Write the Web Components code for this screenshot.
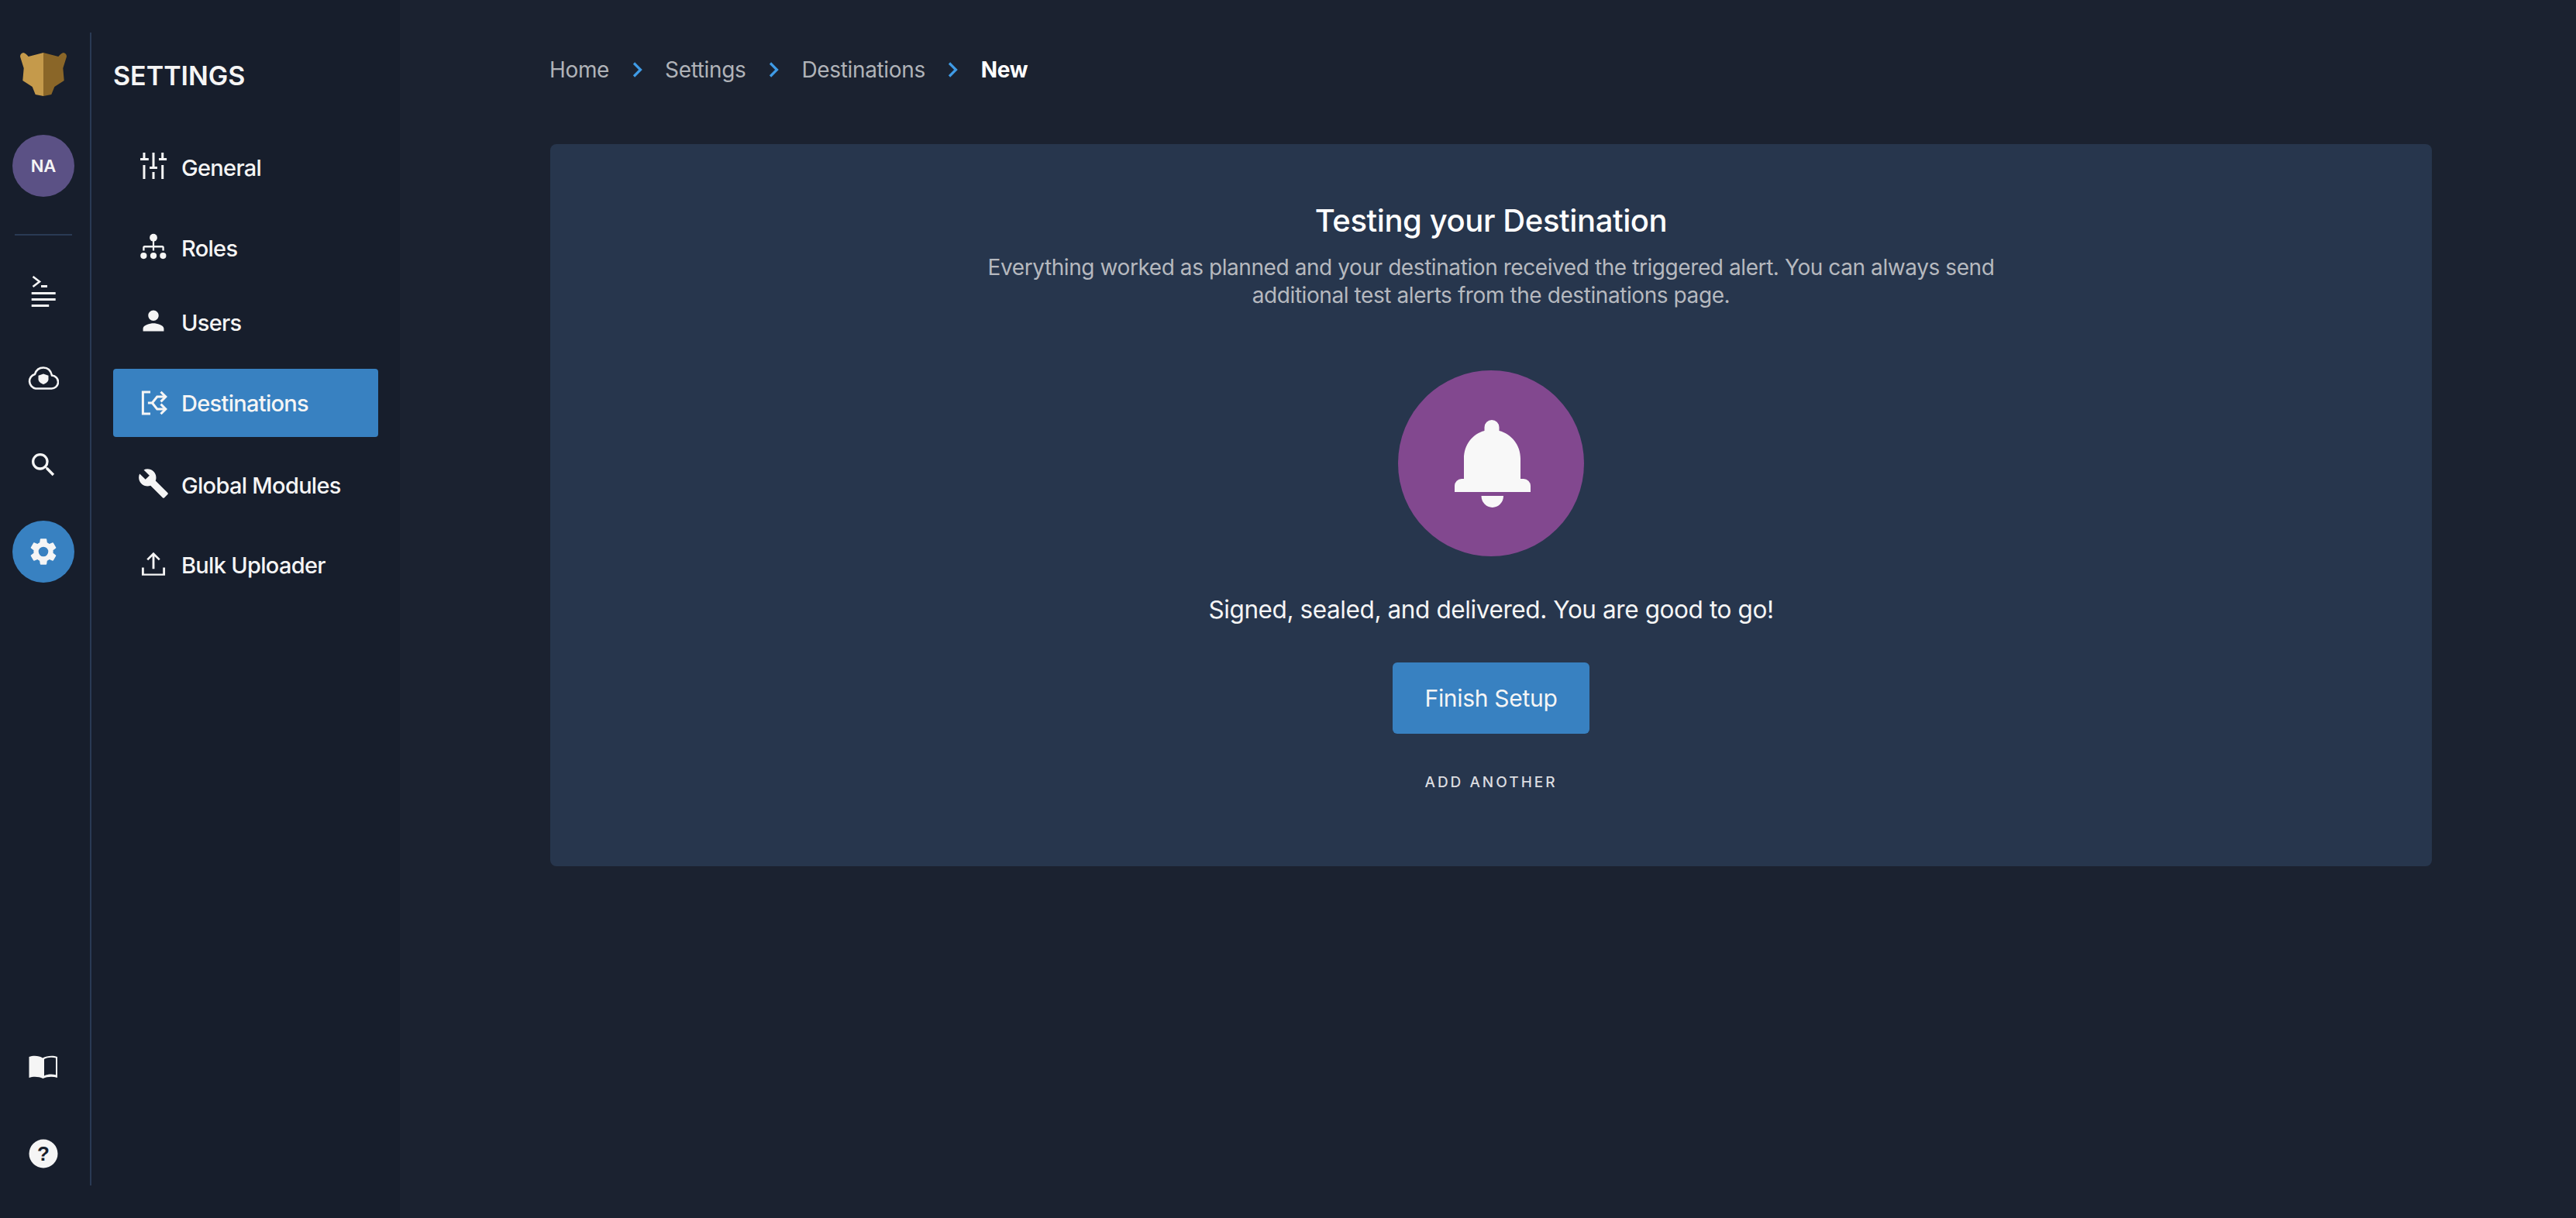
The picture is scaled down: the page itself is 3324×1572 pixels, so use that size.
<!DOCTYPE html>
<html>
<head>
<meta charset="utf-8">
<style>
html, body { margin: 0; height: 100%; background: #1b2230; }
body { font-family: Inter, "Liberation Sans", sans-serif; color: #f5f5f5; }
</style>
</head>
<body>
<app-shell>
  <icon-rail slot="rail"></icon-rail>
  <settings-menu slot="menu"></settings-menu>
  <bread-crumbs slot="crumbs"></bread-crumbs>
  <result-card slot="card"></result-card>
</app-shell>
<script>
const font = 'Inter, "Liberation Sans", sans-serif';

const icons = {
  sliders: '<path d="M3.45 1.3h1.9v4.4h-1.9zM1.3 5.700h6.800v1.900H1.300zM3.45 11.400h1.900v11.300h-1.900zM11.05 1.300h1.900v11.300h-1.900zM8.900 12.600h6.200v1.900H8.900zM11.05 17h1.900v5.700h-1.900zM18.45 1.300h1.900v4.400h-1.900zM16.4 5.700h6.400v1.900h-6.400zM18.45 11.400h1.900v11.300h-1.900z"/>',
  roles: '<circle cx="12" cy="4.900" r="3.100"/><path d="M11.300 7h1.400v4.400h6.400q1.600 0 1.600 1.600v2.500h-1.500v-2.500h-6.500v2.500h-1.400V13H4.800v2.500H3.300V13q0-1.600 1.600-1.600h6.400z"/><circle cx="4" cy="19.600" r="2.600"/><circle cx="12" cy="19.600" r="2.600"/><circle cx="19.800" cy="19.600" r="2.600"/>',
  user: '<path transform="translate(12 12) scale(1.06) translate(-12 -12)" d="M12 12c2.210 0 4-1.790 4-4s-1.790-4-4-4-4 1.790-4 4 1.790 4 4 4zm0 2c-2.670 0-8 1.340-8 4v2h16v-2c0-2.660-5.330-4-8-4z"/>',
  dest: '<g fill="none" stroke="#f5f5f5" stroke-width="1.900"><path d="M9.500 3.200H3.400v17.600h6.100"/><path d="M7.500 12h3.500l4-5h6.500M11 12l4 5h6.500"/><path d="M18 3L22 7l-4 4M18 13l4 4-4 4"/></g>',
  wrench: '<path transform="translate(12 12) scale(1.08) translate(-12 -12)" d="M22.700 19l-9.100-9.100c.9-2.300.4-5-1.500-6.900-2-2-5-2.400-7.400-1.300L9 6 6 9 1.600 4.700C.4 7.100.9 10.100 2.900 12.100c1.900 1.900 4.600 2.400 6.900 1.500l9.100 9.100c.4.4 1 .4 1.400 0l2.300-2.300c.5-.4.5-1.100.1-1.400z"/>',
  upload: '<path d="M11.100 16.500V6.300L7.700 9.700 6.500 8.500 12 3l5.500 5.500-1.200 1.200-3.400-3.400v10.200zM2.500 15.500h1.800v5h15.400v-5h1.800V22H2.500z"/>',
  search: '<path d="M15.500 14h-.79l-.28-.27A6.470 6.470 0 0 0 16 9.500 6.500 6.500 0 1 0 9.500 16c1.610 0 3.090-.59 4.230-1.570l.27.28v.79l5 4.990L20.490 19l-4.990-5zm-6 0C7.010 14 5 11.990 5 9.500S7.010 5 9.500 5 14 7.010 14 9.500 11.990 14 9.500 14z"/>',
  gear: '<path d="M19.140 12.940c.04-.3.06-.61.06-.94 0-.32-.02-.64-.07-.94l2.030-1.580a.49.49 0 0 0 .12-.61l-1.920-3.320a.49.49 0 0 0-.59-.22l-2.390.96c-.5-.38-1.030-.7-1.620-.94l-.36-2.540a.48.48 0 0 0-.48-.41h-3.840c-.24 0-.43.17-.47.41l-.36 2.540c-.59.24-1.130.57-1.620.94l-2.390-.96c-.22-.08-.47 0-.59.22L2.740 8.870c-.12.21-.08.47.12.61l2.030 1.580c-.05.3-.09.63-.09.94s.02.64.07.94l-2.030 1.580a.49.49 0 0 0-.12.61l1.920 3.320c.12.22.37.29.59.22l2.390-.96c.5.38 1.030.7 1.620.94l.36 2.540c.05.24.24.41.48.41h3.840c.24 0 .44-.17.47-.41l.36-2.540c.59-.24 1.130-.56 1.620-.94l2.390.96c.22.08.47 0 .59-.22l1.920-3.320c.12-.22.07-.47-.12-.61l-2.010-1.580zM12 15.600A3.600 3.600 0 1 1 12 8.400a3.600 3.600 0 0 1 0 7.200z"/>'
};

class AppShell extends HTMLElement {
  constructor() {
    super();
    this.attachShadow({ mode: "open" }).innerHTML = `
<style>
:host { display: flex; height: 1572px; overflow: hidden; }
aside { display: flex; width: 516px; flex: none; background: #171e2c; }
main { flex: 1; padding: 70px 186px 0 193px; }
.crumbs { display: block; margin-bottom: 76px; }
.card { display: block; margin-left: 1px; }
</style>
<aside><slot name="rail"></slot><slot name="menu"></slot></aside>
<main><div class="crumbs"><slot name="crumbs"></slot></div><div class="card"><slot name="card"></slot></div></main>`;
  }
}

class IconRail extends HTMLElement {
  constructor() {
    super();
    this.attachShadow({ mode: "open" }).innerHTML = `
<style>
:host { display: flex; flex-direction: column; align-items: center; width: 118px; box-sizing: border-box; margin: 42px 0; padding-right: 4px; height: 1488px; border-right: 2px solid #2a3a54; flex: none; }
svg { display: block; fill: #f5f5f5; flex: none; }
.logo { margin-top: 26px; }
.badge { width: 80px; height: 80px; border-radius: 50%; display: flex; align-items: center; justify-content: center; flex: none; }
.na { margin-top: 50px; background: #5b5185; font: 600 22px ${font}; }
hr { width: 74px; height: 2px; border: 0; background: #2a3a54; margin: 48px 0 0; flex: none; }
.gear { background: #3881c1; margin-top: 52px; }
.bottom { margin-top: auto; display: flex; flex-direction: column; align-items: center; }
</style>
<svg class="logo" width="60" height="56" viewBox="0 0 60 56">
  <path fill="#c59a4b" d="M30 0L10.700 5Q7 .5 4 0Q0 1 0 5L4.700 20L3.300 36L15.700 44L19.700 54L30 56z"/>
  <path fill="#8a6628" d="M30 0L49.300 5Q53 .5 56 0Q60 1 60 5L55.300 20L56.700 36L44.300 44L40.300 54L30 56z"/>
</svg>
<div class="badge na">NA</div>
<hr>
<svg style="margin-top:52px" width="32" height="41" viewBox="0 0 32 41">
  <path fill="none" stroke="#f5f5f5" stroke-width="2.600" d="M2.500 1L11 7.500L2.500 14"/>
  <path d="M13 12h8v3h-8zM.7 21h31v3H.7zM.7 29h31v3H.7zM.7 37h22.500v3H.7z"/>
</svg>
<svg style="margin-top:76px" width="40" height="30" viewBox="0 0 40 30">
  <path fill="none" stroke="#f5f5f5" stroke-width="2.600" d="M10 28.500H30a8.500 8.500 0 0 0 1-17C29.500 5 25.500 1.500 20 1.500c-5.500 0-9.500 3.500-11 8.500A9.500 9.500 0 0 0 10 28.500z"/>
  <path d="M20 9.500l6.500 2.300v4.500c0 3.200-2.800 5.500-6.500 6.700-3.700-1.200-6.500-3.500-6.500-6.700v-4.500z"/>
</svg>
<svg style="margin-top:77px" width="40" height="40" viewBox="0 0 24 24">${icons.search}</svg>
<div class="badge gear"><svg width="42" height="42" viewBox="0 0 24 24">${icons.gear}</svg></div>
<div class="bottom">
  <svg width="38" height="30" viewBox="0 0 38 30">
    <path d="M18 3.500C14 .5 6 0 .5 2v27c5.500-2 13-1.500 18 1 5-2.500 12.500-3 18.500-1V2c-5.500-2-13.500-1.500-19 1.500z" />
    <path fill="#171e2c" d="M20 5c4-2.500 10-2.800 15-1.500v21.700c-5-1-11-.8-15 1.300z"/>
  </svg>
  <svg style="margin:78px 0 22px" width="38" height="38" viewBox="0 0 38 38">
    <circle cx="19" cy="19" r="18.500"/>
    <text x="19" y="28" text-anchor="middle" font-family="Liberation Sans" font-weight="700" font-size="26" fill="#171e2c">?</text>
  </svg>
</div>`;
  }
}

class MenuItem extends HTMLElement {
  constructor() {
    super();
    const icon = icons[this.getAttribute("icon")];
    this.attachShadow({ mode: "open" }).innerHTML = `
<style>
:host { display: flex; align-items: center; height: 88px; margin-top: var(--gap, 0); padding-left: 33px; gap: 17px; font: 500 29px ${font}; letter-spacing: -0.7px; color: #f5f5f5; border-radius: 4px; }
:host([active]) { background: #3881c1; }
svg { fill: #f5f5f5; flex: none; display: block; margin-bottom: var(--lift, 5px); }
</style>
<svg width="38" height="38" viewBox="0 0 24 24">${icon}</svg><slot></slot>`;
  }
}

class SettingsMenu extends HTMLElement {
  constructor() {
    super();
    this.attachShadow({ mode: "open" }).innerHTML = `
<style>
:host { display: block; flex: 1; padding: 0 28px 0 28px; }
h2 { margin: 0; padding-top: 78px; height: 87px; font: 600 34px/40px ${font}; letter-spacing: 0; color: #f5f5f5; }
</style>
<h2>SETTINGS</h2>
<menu-item icon="sliders" style="--gap:7px">General</menu-item>
<menu-item icon="roles" style="--gap:16px">Roles</menu-item>
<menu-item icon="user" style="--gap:8px">Users</menu-item>
<menu-item icon="dest" active style="--gap:16px;--lift:0px">Destinations</menu-item>
<menu-item icon="wrench" style="--gap:18px">Global Modules</menu-item>
<menu-item icon="upload" style="--gap:15px">Bulk Uploader</menu-item>`;
  }
}

class BreadCrumbs extends HTMLElement {
  constructor() {
    super();
    const chev = '<svg width="13" height="20" viewBox="0 0 13 20"><path d="M2 1.500 L10.500 10 L2 18.500" fill="none" stroke="#3f9be6" stroke-width="3.200"/></svg>';
    this.attachShadow({ mode: "open" }).innerHTML = `
<style>
:host { display: flex; align-items: center; gap: 29.5px; height: 40px; font: 400 28px ${font}; letter-spacing: -0.35px; color: #b0b3b8; }
b { font-weight: 700; color: #fff; }
svg { flex: none; display: block; }
</style>
<span>Home</span>${chev}<span>Settings</span>${chev}<span>Destinations</span>${chev}<b>New</b>`;
  }
}

class ResultCard extends HTMLElement {
  constructor() {
    super();
    this.attachShadow({ mode: "open" }).innerHTML = `
<style>
:host { display: flex; flex-direction: column; align-items: center; height: 932px; box-sizing: border-box; padding-top: 74px; background: #27364d; border-radius: 8px; text-align: center; }
h1 { margin: 0; font: 500 40px/50px ${font}; letter-spacing: -0.4px; color: #fff; }
p { margin: 17px 0 0; width: 1320px; font: 400 28px/36px ${font}; letter-spacing: -0.42px; color: #b6b9bf; }
.circle { margin-top: 79px; width: 240px; height: 240px; border-radius: 50%; background: #82488f; display: flex; align-items: center; justify-content: center; }
.circle svg { fill: #f8f8f8; display: block; }
.done { margin-top: 47px; font: 400 31.5px/44px ${font}; letter-spacing: -0.4px; color: #f5f5f5; }
button { margin-top: 46px; width: 254px; height: 92px; border: 0; border-radius: 6px; background: #3881c1; color: #f5f5f5; font: 400 30px ${font}; letter-spacing: -0.3px; }
.link { margin-top: 51px; font: 500 19px/24px ${font}; letter-spacing: 3px; color: #dcdde0; }
</style>
<h1>Testing your Destination</h1>
<p>Everything worked as planned and your destination received the triggered alert. You can always send additional test alerts from the destinations page.</p>
<div class="circle"><svg width="120" height="120" viewBox="0 0 120 120">
  <path d="M61 4a9.500 9.500 0 0 1 9.500 9.500V18C86 22 98 36 98 54V80h4a9 9 0 0 1 9 9v8H13v-8a9 9 0 0 1 9-9h3V54C25 36 36 22 51.500 18v-4.500A9.500 9.500 0 0 1 61 4z"/>
  <path d="M47.500 102H76a14.250 15 0 0 1-28.500 0z"/>
</svg></div>
<div class="done">Signed, sealed, and delivered. You are good to go!</div>
<button>Finish Setup</button>
<div class="link">ADD ANOTHER</div>`;
  }
}

customElements.define("app-shell", AppShell);
customElements.define("icon-rail", IconRail);
customElements.define("menu-item", MenuItem);
customElements.define("settings-menu", SettingsMenu);
customElements.define("bread-crumbs", BreadCrumbs);
customElements.define("result-card", ResultCard);
</script>
</body>
</html>
